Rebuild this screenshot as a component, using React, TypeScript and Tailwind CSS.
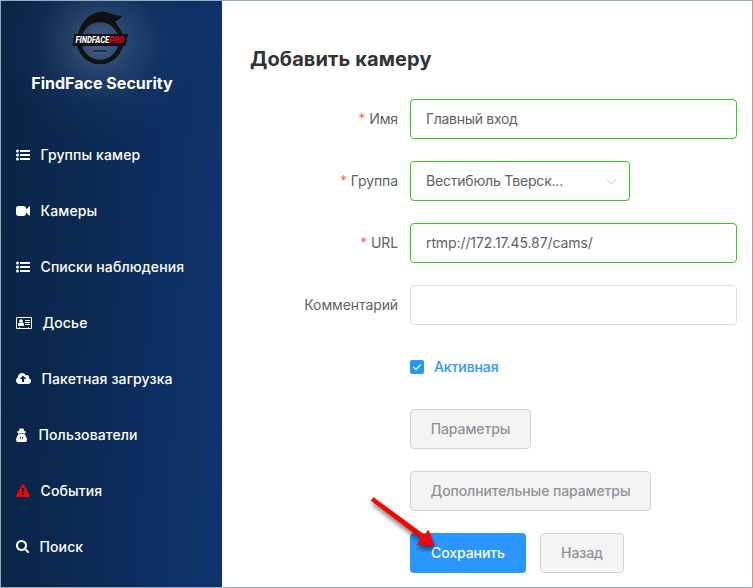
import type { ReactNode } from "react";

const LIST = (
  <>
    <circle cx="192" cy="384" r="192" />
    <circle cx="192" cy="896" r="192" />
    <circle cx="192" cy="1408" r="192" />
    <rect x="512" y="256" width="1280" height="256" rx="30" />
    <rect x="512" y="768" width="1280" height="256" rx="30" />
    <rect x="512" y="1280" width="1280" height="256" rx="30" />
  </>
);

const CARD = (
  <>
    <path fillRule="evenodd" d="M160 128H1888Q2048 128 2048 288V1504Q2048 1664 1888 1664H160Q0 1664 0 1504V288Q0 128 160 128ZM128 256V1536H384V1440H512V1536H1536V1440H1664V1536H1920V256Z" />
    <circle cx="640" cy="640" r="235" />
    <path d="M430 800Q520 900 640 900T850 800Q1024 850 1024 1160Q1024 1280 930 1280H350Q256 1280 256 1160Q256 850 430 800Z" />
    <path d="M1152 512H1792V640H1152ZM1152 768H1792V896H1152ZM1152 1024H1792V1152H1152Z" />
  </>
);

const SECRET = (
  <path fillRule="evenodd" d="M450 100Q520 0 610 60Q704 110 800 60Q890 0 960 100L1040 380Q1320 430 1320 510Q1240 590 1120 620V780L1080 900L1240 920L1210 1040Q1408 1150 1408 1500Q1408 1780 1160 1780H248Q0 1780 0 1500Q0 1150 198 1040L168 920L328 900L288 780V620Q168 590 88 510Q88 430 368 380ZM400 650L440 750H620L670 680H740L790 750H970L1010 650ZM470 1080L600 1550L640 1170ZM938 1080L808 1550L768 1170Z" />
);

type Item = { label: string; w: number; box: string; icon: ReactNode; red?: boolean };

const ITEMS: Item[] = [
  { label: "Группы камер", w: 14, box: "0 0 1792 1792", icon: LIST },
  {
    label: "Камеры", w: 14, box: "0 0 1792 1792",
    icon: <path d="M1792 352v1088q0 42-39 59-13 5-25 5-27 0-45-19l-403-403v166q0 119-84.5 203.5t-203.5 84.5h-704q-119 0-203.5-84.5t-84.5-203.5v-704q0-119 84.5-203.5t203.5-84.5h704q119 0 203.5 84.5t84.5 203.5v165l403-402q18-19 45-19 12 0 25 5 39 17 39 59z" />,
  },
  { label: "Списки наблюдения", w: 14, box: "0 0 1792 1792", icon: LIST },
  { label: "Досье", w: 16, box: "0 0 2048 1792", icon: CARD },
  {
    label: "Пакетная загрузка", w: 15, box: "-64 0 1920 1792",
    icon: <path d="M1216 864q0-14-9-23l-352-352q-9-9-23-9t-23 9l-351 351q-10 12-10 24 0 14 9 23t23 9h224v352q0 13 9.5 22.5t22.5 9.5h192q13 0 22.5-9.5t9.5-22.5v-352h224q13 0 22.5-9.5t9.5-22.5zm640 288q0 159-112.5 271.5t-271.5 112.5h-1088q-185 0-316.5-131.5t-131.5-316.5q0-130 70-240t188-165q-2-30-2-43 0-212 150-362t362-150q156 0 285.5 87t188.5 231q71-62 166-62 106 0 181 75t75 181q0 76-41 138 130 31 213.5 135.5t83.5 238.5z" />,
  },
  { label: "Пользователи", w: 12, box: "0 0 1536 1792", icon: SECRET },
  {
    label: "События", w: 14, box: "0 0 1792 1792", red: true,
    icon: <path d="M1024 1375v-190q0-14-9.5-23.5t-22.5-9.5h-192q-13 0-22.5 9.5t-9.5 23.5v190q0 14 9.5 23.5t22.5 9.5h192q13 0 22.5-9.5t9.5-23.5zm-2-374l18-459q0-12-10-19-13-11-24-11h-220q-11 0-24 11-10 7-10 21l17 457q0 10 10 16.5t24 6.5h185q14 0 23.5-6.5t10.5-16.5zm-14-934l768 1408q35 63-2 126-17 29-46.5 46t-63.5 17h-1536q-34 0-63.5-17t-46.5-46q-37-63-2-126l768-1408q17-31 47-49t65-18 65 18 47 49z" />,
  },
  {
    label: "Поиск", w: 13, box: "64 128 1664 1792",
    icon: <path d="M1216 832q0-185-131.5-316.5t-316.5-131.5-316.5 131.5-131.5 316.5 131.5 316.5 316.5 131.5 316.5-131.5 131.5-316.5zm512 832q0 52-38 90t-90 38q-54 0-90-38l-343-342q-179 124-399 124-143 0-273.5-55.5t-225-150-150-225-55.5-273.5 55.5-273.5 150-225 225-150 273.5-55.5 273.5 55.5 225 150 150 225 55.5 273.5q0 220-124 399l343 343q37 37 37 90z" />,
  },
];

function Logo() {
  return (
    <svg width="60" height="56" viewBox="70 10 60 56" className="overflow-visible">
      <circle cx="100" cy="41" r="21" fill="none" stroke="#111111" strokeWidth="4.6" />
      <path d="M79 30C84 18 93 12 102 11.5C109 12 115 16 122 16C120 19 117 20.5 115 21.5L119 27C111 19 102 18 94 20C87 22 82 26 79 30Z" fill="#111111" />
      <path d="M74.5 34H128L125.5 46H72Z" fill="#111111" />
      <path d="M93 51H107" stroke="#202a3c" strokeWidth="1.8" />
      <text x="75.5" y="42.8" fontFamily="Roboto, sans-serif" fontSize="8.3" fontWeight="800" fontStyle="italic" fill="white" textLength="48.5" lengthAdjust="spacingAndGlyphs">
        FINDFACE<tspan fill="#f0002e">PRO</tspan>
      </text>
    </svg>
  );
}

function Field({ label, required, children }: { label: string; required?: boolean; children?: ReactNode }) {
  return (
    <div className="flex h-10 items-center">
      <div className="w-[160px] shrink-0 pr-3 text-right tracking-[-0.1px] text-[#606266]">
        {required && <span className="mr-1 text-[#f56c6c]">*</span>}
        {label}
      </div>
      {children}
    </div>
  );
}

const BTN = "h-10 shrink-0 rounded border border-[#d3d4d6] bg-[#f4f4f5] text-center font-medium tracking-[-0.1px] text-[#909399]";

export default function App() {
  return (
    <div className="flex h-[588px] w-[753px] overflow-hidden border border-[#90afba] bg-white font-[Inter,sans-serif] text-sm">
      <aside className="w-[221px] shrink-0 bg-[radial-gradient(circle_at_99px_42px,rgba(115,135,170,0.58)_0,rgba(85,112,155,0.32)_32px,rgba(50,85,135,0.12)_62px,transparent_100px),linear-gradient(93deg,#0a2344_0%,#0b2850_35%,#0d3064_75%,#0f346e_100%)] text-white">
        <div className="flex h-[126px] flex-col items-center pt-[9px] pr-[19px]">
          <div className="mr-1"><Logo /></div>
          <div className="mt-[5px] text-base leading-6 font-bold tracking-[0.02px]">FindFace Security</div>
        </div>
        <nav>
          {ITEMS.map((item) => (
            <a key={item.label} className="flex h-14 items-center gap-[10.5px] pl-[15px] font-medium tracking-[0.11px]">
              <svg width={item.w} height="14" viewBox={item.box} className={item.red ? "shrink-0 fill-[#ff0000]" : "shrink-0 fill-white"}>
                {item.icon}
              </svg>
              {item.label}
            </a>
          ))}
        </nav>
      </aside>
      <main className="min-w-0 flex-1 pr-[15px] pl-7">
        <h1 className="mt-[42px] text-xl leading-8 font-bold tracking-[0.1px] text-[#333333]">Добавить камеру</h1>
        <form className="mt-6 flex flex-col gap-[22px]">
          <Field label="Имя" required>
            <div className="flex h-10 flex-1 items-center rounded border border-[#35c51c] px-[15px] tracking-[-0.3px] text-[#606266]">Главный вход</div>
          </Field>
          <Field label="Группа" required>
            <div className="flex h-10 w-[220px] items-center justify-between rounded border border-[#35c51c] pr-3 pl-[15px] tracking-[-0.2px] text-[#606266]">
              Вестибюль Тверск...
              <svg width="11" height="7" viewBox="0 0 11 7" fill="none" stroke="#c0c4cc">
                <path d="M.5 1L5.5 5.7L10.5 1" />
              </svg>
            </div>
          </Field>
          <Field label="URL" required>
            <div className="flex h-10 flex-1 items-center rounded border border-[#35c51c] px-[15px] tracking-[-0.1px] text-[#606266]">rtmp://172.17.45.87/cams/</div>
          </Field>
          <Field label="Комментарий">
            <div className="h-10 flex-1 rounded border border-[#dcdfe6]" />
          </Field>
          <Field label="">
            <span className="grid size-3.5 place-items-center rounded-[2px] bg-[#2997ff]">
              <svg width="10" height="10" viewBox="0 0 10 10" fill="none" stroke="white" strokeWidth="1.2">
                <path d="M1.2 5L4 7.5L8.8 2.5" />
              </svg>
            </span>
            <span className="ml-2.5 font-medium tracking-[-0.1px] text-[#2997ff]">Активная</span>
          </Field>
          <Field label="">
            <button type="button" className={BTN + " w-[121px]"}>Параметры</button>
          </Field>
          <Field label="">
            <button type="button" className={BTN + " w-[241px]"}>Дополнительные параметры</button>
          </Field>
          <Field label="">
            <div className="relative flex gap-3.5">
              <button type="button" className="h-10 w-[116px] shrink-0 rounded bg-[#2997ff] text-center font-medium tracking-[-0.07px] text-white">Сохранить</button>
              <button type="button" className={BTN + " w-[84px]"}>Назад</button>
              <svg width="80" height="66" viewBox="365 490 80 66" className="absolute -top-[43px] -left-[45px] drop-shadow-[1px_4px_2px_rgba(0,0,0,0.5)]">
                <path d="M371 500.5L373.5 497.5L424.5 535L428.5 530L434 546L417 544.5L421.5 539Z" fill="#ff0000" stroke="#e50000" strokeWidth=".5" />
              </svg>
            </div>
          </Field>
        </form>
      </main>
    </div>
  );
}
